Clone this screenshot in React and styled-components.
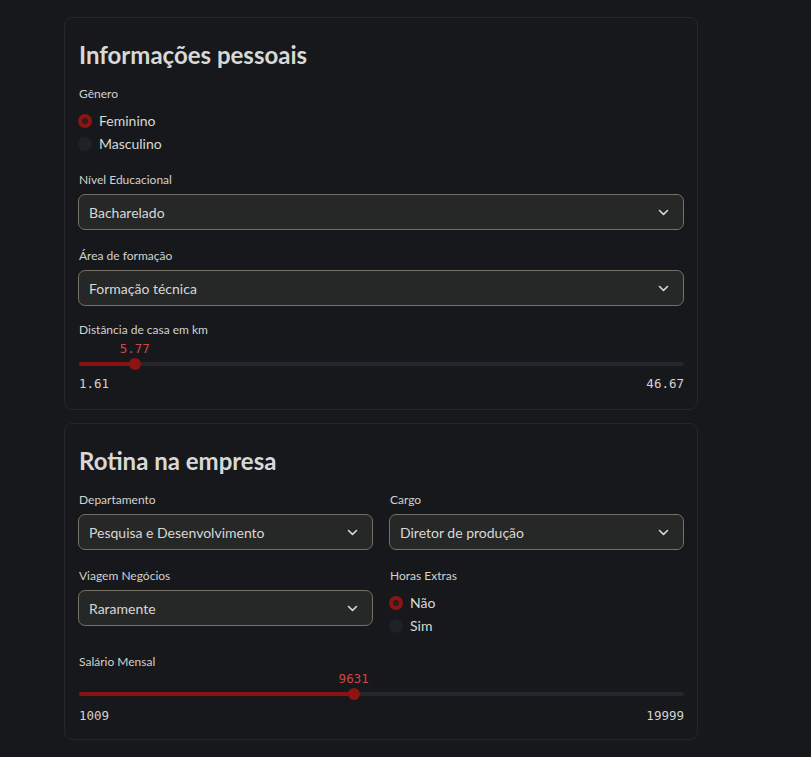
import React from 'react';
import styled, { createGlobalStyle } from 'styled-components';

const GlobalStyle = createGlobalStyle`
  html, body {
    margin: 0;
    background: #17181b;
  }
  body {
    font-family: Lato, "Noto Sans", sans-serif;
    color: #d6d6d4;
  }
`;

const Page = styled.div`
  padding: 17px 0 17px 64px;
  display: flex;
  flex-direction: column;
  gap: 13px;
  width: 634px;
`;

const Card = styled.section`
  border: 1px solid #25262a;
  border-radius: 8px;
  padding: 14px 13px ${({ $bottom }) => $bottom || 17}px;
  display: flex;
  flex-direction: column;
`;

const Title = styled.h3`
  margin: 0 0 6px 1px;
  font-size: 24px;
  font-weight: 700;
  line-height: 46px;
  color: #d8d9d6;
`;

const Field = styled.div`
  display: flex;
  flex-direction: column;
  margin-bottom: ${({ $mb }) => ($mb === undefined ? 16 : $mb)}px;
`;

const Label = styled.div`
  font-size: 12px;
  line-height: 20px;
  margin: 0 0 ${({ $gap }) => $gap || 4}px 1px;
  color: #d2d2d0;
`;

const SelectBox = styled.div`
  height: 36px;
  box-sizing: border-box;
  border: 1px solid #757064;
  border-radius: 7px;
  background: #262727;
  display: flex;
  align-items: center;
  justify-content: space-between;
  padding: 0 14px 0 10px;
  font-size: 14px;
  color: #d8d8d6;
`;

const RadioList = styled.div`
  display: flex;
  flex-direction: column;
`;

const RadioItem = styled.div`
  height: 23px;
  display: flex;
  align-items: center;
  gap: 7px;
  font-size: 14px;
  color: #d8d8d6;
`;

const Dot = styled.span`
  width: 14px;
  height: 14px;
  box-sizing: border-box;
  border-radius: 50%;
  background: ${({ $on }) => ($on ? '#2b1d20' : '#1f2028')};
  border: ${({ $on }) => ($on ? '4px solid #8e1414' : 'none')};
`;

const Row = styled.div`
  display: grid;
  grid-template-columns: 1fr 1fr;
  column-gap: 16px;
  align-items: start;
`;

const Col = styled.div`
  display: flex;
  flex-direction: column;
`;

const SliderWrap = styled.div`
  display: flex;
  flex-direction: column;
  padding: 0 0 0 1px;
`;

const ValueLine = styled.div`
  position: relative;
  height: 17px;
  margin-top: ${({ $shift }) => $shift}px;
`;

const Value = styled.span`
  position: absolute;
  top: 0;
  transform: translateX(-50%);
  font-family: "DejaVu Sans Mono", "Liberation Mono", monospace;
  font-size: 12.5px;
  line-height: 16px;
  color: #d24646;
`;

const Track = styled.div`
  position: relative;
  height: 12px;
  display: flex;
  align-items: center;
`;

const Rail = styled.div`
  width: 100%;
  height: 4px;
  border-radius: 2px;
  background: #25262b;
  overflow: hidden;
  display: flex;
`;

const Fill = styled.div`
  height: 100%;
  background: #8a1212;
`;

const Thumb = styled.span`
  position: absolute;
  top: 0;
  width: 12px;
  height: 12px;
  border-radius: 50%;
  background: #8e1313;
  transform: translateX(-50%);
`;

const Bounds = styled.div`
  display: flex;
  justify-content: space-between;
  margin-top: ${({ $gap }) => $gap}px;
  font-family: "DejaVu Sans Mono", "Liberation Mono", monospace;
  font-size: 12.5px;
  line-height: 16px;
  color: #d2d2d0;
`;

const Spacer = styled.div`
  height: ${({ $h }) => $h}px;
`;

const Chevron = () => (
  <svg width="11" height="7" viewBox="0 0 11 7" fill="none">
    <path d="M1.5 1.5 5.5 5.3l4-3.8" stroke="#d8d8d6" strokeWidth="1.6" strokeLinecap="round" strokeLinejoin="round" />
  </svg>
);

const Select = ({ label, value, mb }) => (
  <Field $mb={mb}>
    <Label>{label}</Label>
    <SelectBox>
      <span>{value}</span>
      <Chevron />
    </SelectBox>
  </Field>
);

const Radio = ({ label, options, selected, mb }) => (
  <Field $mb={mb}>
    <Label $gap={5}>{label}</Label>
    <RadioList>
      {options.map((o) => (
        <RadioItem key={o}>
          <Dot $on={o === selected} />
          {o}
        </RadioItem>
      ))}
    </RadioList>
  </Field>
);

const Slider = ({ label, min, max, value, fmt, shift, gap }) => {
  const pct = ((value - min) / (max - min)) * 100;
  return (
    <Field $mb={0}>
      <Label $gap={0}>{label}</Label>
      <SliderWrap>
        <ValueLine $shift={shift}>
          <Value style={{ left: `${pct}%` }}>{fmt(value)}</Value>
        </ValueLine>
        <Track>
          <Rail>
            <Fill style={{ width: `${pct}%` }} />
          </Rail>
          <Thumb style={{ left: `${pct}%` }} />
        </Track>
        <Bounds $gap={gap}>
          <span>{fmt(min)}</span>
          <span>{fmt(max)}</span>
        </Bounds>
      </SliderWrap>
    </Field>
  );
};

export default function App() {
  return (
    <>
      <GlobalStyle />
      <Page>
        <Card>
          <Title>Informações pessoais</Title>
          <Radio label="Gênero" options={['Feminino', 'Masculino']} selected="Feminino" mb={15} />
          <Select label="Nível Educacional" value="Bacharelado" />
          <Select label="Área de formação" value="Formação técnica" mb={14} />
          <Slider
            label="Distância de casa em km"
            min={1.61}
            max={46.67}
            value={5.77}
            fmt={(v) => v.toFixed(2)}
            shift={-3}
            gap={6}
          />
        </Card>
        <Card $bottom={15}>
          <Title>Rotina na empresa</Title>
          <Row>
            <Select label="Departamento" value="Pesquisa e Desenvolvimento" />
            <Select label="Cargo" value="Diretor de produção" />
          </Row>
          <Row>
            <Col>
              <Select label="Viagem Negócios" value="Raramente" mb={0} />
            </Col>
            <Col>
              <Radio label="Horas Extras" options={['Não', 'Sim']} selected="Não" mb={0} />
            </Col>
          </Row>
          <Spacer $h={15} />
          <Slider
            label="Salário Mensal"
            min={1009}
            max={19999}
            value={9631}
            fmt={(v) => String(v)}
            shift={-5}
            gap={8}
          />
        </Card>
      </Page>
    </>
  );
}
